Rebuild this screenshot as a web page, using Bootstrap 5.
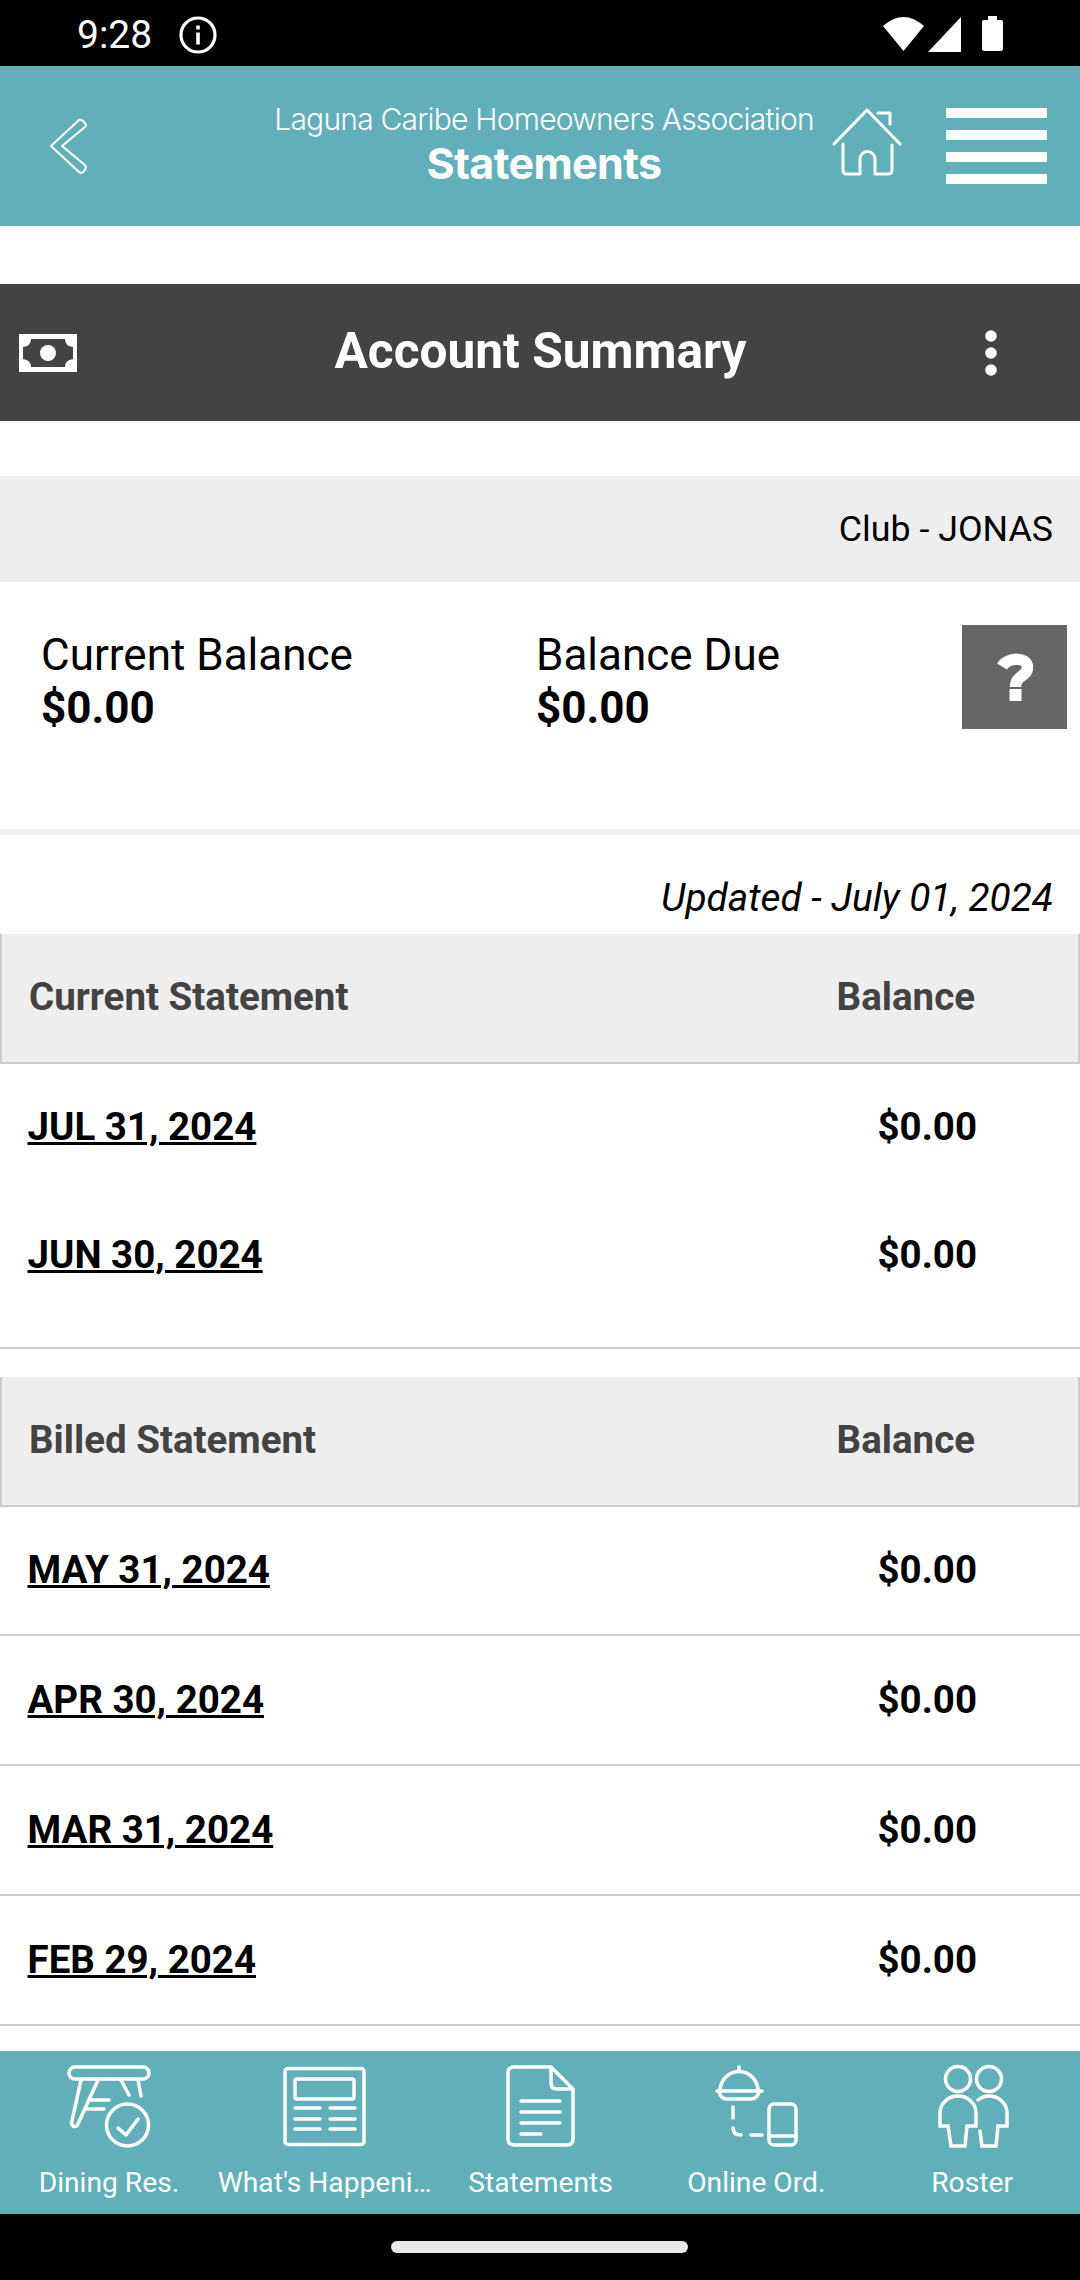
<!DOCTYPE html>
<html lang="en">
<head>
<meta charset="utf-8">
<meta name="viewport" content="width=device-width, initial-scale=1">
<title>Statements</title>
<link href="https://cdn.jsdelivr.net/npm/bootstrap@5.3.0/dist/css/bootstrap.min.css" rel="stylesheet">
<style>
  body { font-family: Roboto, sans-serif; color: #000; background: #fff; width: 1080px; height: 2280px; overflow: hidden; line-height: 1; }
  svg { display: block; flex: none; }
  .status-strip { height: 66px; padding: 4px 75px 0 77px; font-size: 39px; }
  .status-info { margin-left: 27px; }
  .app-head { height: 160px; background: #62afbc; padding: 0 33px 0 48px; }
  .head-titles { font-family: Inter, sans-serif; width: 540px; text-align: center; margin-bottom: 5px; }
  .club-name { font-size: 30px; font-weight: 400; line-height: 40px; letter-spacing: -.78px; white-space: nowrap; }
  .club-name { font-weight: 350; }
  .page-name { font-size: 43px; font-weight: 700; line-height: 49px; letter-spacing: -.6px; }
  .home-icon { margin: 0 44px 9px 18px; }
  .summary-head { height: 137px; margin-top: 58px; background: #434343; padding: 0 83px 0 19px; }
  .summary-title { font-size: 49.6px; margin-left: 19px; padding-bottom: 1px; }
  .club-strip { height: 106px; margin-top: 55px; background: #eee; padding: 1px 27px 0; font-size: 35.8px; }
  .balances { height: 253px; border-bottom: 6px solid #eee; padding: 43px 13px 0 41px; font-size: 44px; line-height: 53px; }
  .balance-col { width: 495px; padding-top: 4px; }
  .due-col { width: 380px; }
  .help-btn { width: 105px; height: 104px; background: #666; border: 0; border-radius: 0; }
  .updated { height: 99px; padding: 43px 27px 0; font-size: 38.8px; line-height: 40px; }
  .list-head { height: 130px; background: #eee; border: 2px solid #ccc; border-top: 0; color: #434343; font-size: 38.5px; padding: 0 103px 1px 27px; }
  .list-line { height: 128px; padding: 0 103px 2px 27.5px; font-size: 38.5px; }
  .list-line.ruled { height: 130px; padding-bottom: 0; }
  .list-line.first-line { height: 129px; }
  .list-line a { color: #000; text-underline-offset: 2px; text-decoration-thickness: 3px; }
  .ruled { border-bottom: 2px solid #ccc; }
  .closing { height: 29px; margin-bottom: 28px; }
  .tabs { height: 163px; background: #62afbc; color: #fff; font-size: 28.2px; padding-left: 1px; }
  .tab-cell { width: 216px; padding-top: 13px; white-space: nowrap; }
  .tab-cell svg { margin-bottom: 21px; }
  .home-zone { height: 66px; }
  .home-pill { width: 297px; height: 12px; background: #e8e8e8; margin-right: 1px; }
  .ln { fill: none; stroke: #fff; stroke-width: 3; stroke-linecap: round; stroke-linejoin: round; }
  .ln-thin { stroke-width: 2.2; }
  .ln-tab { stroke-width: 3.5; }
  .ln-sharp { stroke-linejoin: miter; }
</style>
<script src="https://cdn.jsdelivr.net/npm/bootstrap@5.3.0/dist/js/bootstrap.bundle.min.js"></script>
</head>
<body class="d-flex flex-column">
  <div class="status-strip bg-black text-white d-flex align-items-center justify-content-between flex-shrink-0">
    <div class="d-flex align-items-center">
      <span>9:28</span>
      <svg class="status-info" width="38" height="38" viewBox="0 0 38 38"><circle cx="19" cy="19" r="17" fill="none" stroke="#fff" stroke-width="3.2"/><path d="M19 9.500v4M19 16.500v12" stroke="#fff" stroke-width="3.600"/></svg>
    </div>
    <svg width="122" height="38" viewBox="0 0 122 38" fill="#fff"><path d="M0 10Q20.500-8 41 10L20.500 35zM78 1v35H45zM105 0h9v4h4q2 0 2 2v27q0 2-2 2h-17q-2 0-2-2V6q0-2 2-2h4z"/></svg>
  </div>

  <header class="app-head text-white d-flex align-items-center justify-content-between flex-shrink-0">
    <svg width="42" height="58" viewBox="0 0 42 58"><path class="ln ln-thin" d="M3 29 31 3Q34 2 36 5 39 8 37 10L14 29 37 48Q39 51 36 54 34 57 31 55Z"/></svg>
    <div class="d-flex align-items-center">
      <div class="head-titles">
        <div class="club-name">Laguna Caribe Homeowners Association</div>
        <div class="page-name">Statements</div>
      </div>
      <svg class="home-icon" width="70" height="70" viewBox="0 0 70 70"><path class="ln" d="M2 37 35 3 68 37M46 6H58V17M11 37V63Q11 67 15 67H28V52A7.500 7.500 0 0 1 43 52V67H56Q60 67 60 63V38"/></svg>
      <svg width="101" height="76" viewBox="0 0 101 76" fill="#fff"><path d="M0 0h101v10H0zM0 22h101v10H0zM0 44h101v10H0zM0 66h101v10H0z"/></svg>
    </div>
  </header>

  <section class="summary-head text-white d-flex align-items-center justify-content-between flex-shrink-0">
    <svg width="58" height="38" viewBox="0 0 58 38"><path fill="#fff" fill-rule="evenodd" d="M0 0H58V38H0ZM12 5Q12 12 4 13V25Q12 26 12 33H46Q46 26 54 25V13Q46 12 46 5Z"/><circle cx="29" cy="19" r="8" fill="#fff"/></svg>
    <div class="summary-title fw-bold">Account Summary</div>
    <svg width="12" height="46" viewBox="0 0 12 46" fill="#fff"><circle cx="6" cy="6" r="5.800"/><circle cx="6" cy="23" r="5.800"/><circle cx="6" cy="40" r="5.800"/></svg>
  </section>

  <div class="club-strip d-flex align-items-center justify-content-end flex-shrink-0">Club - JONAS</div>

  <section class="balances d-flex flex-shrink-0">
    <div class="balance-col flex-shrink-0">Current Balance<div class="fw-bold">$0.00</div></div>
    <div class="balance-col due-col flex-shrink-0">Balance Due<div class="fw-bold">$0.00</div></div>
    <button class="help-btn btn p-0 ms-auto flex-shrink-0 d-flex align-items-center justify-content-center" aria-label="Help">
      <svg width="36" height="48" viewBox="0 0 36 48"><path fill="none" stroke="#fff" stroke-width="11.500" d="M5 13.500C11 4 31.500 3.500 30.500 15 30 24 18.500 22 18.500 34"/><path fill="#fff" d="M12.500 36h12v12h-12z"/></svg>
    </button>
  </section>

  <div class="updated text-end fst-italic flex-shrink-0">Updated - July 01, 2024</div>

  <section class="flex-shrink-0">
    <div class="list-head fw-bold d-flex align-items-center justify-content-between"><span>Current Statement</span><span>Balance</span></div>
    <div class="list-line fw-bold d-flex align-items-center justify-content-between"><a href="#">JUL 31, 2024</a><span>$0.00</span></div>
    <div class="list-line fw-bold d-flex align-items-center justify-content-between"><a href="#">JUN 30, 2024</a><span>$0.00</span></div>
    <div class="closing ruled"></div>
  </section>

  <section class="flex-grow-1">
    <div class="list-head fw-bold d-flex align-items-center justify-content-between"><span>Billed Statement</span><span>Balance</span></div>
    <div class="list-line ruled first-line fw-bold d-flex align-items-center justify-content-between"><a href="#">MAY 31, 2024</a><span>$0.00</span></div>
    <div class="list-line ruled fw-bold d-flex align-items-center justify-content-between"><a href="#">APR 30, 2024</a><span>$0.00</span></div>
    <div class="list-line ruled fw-bold d-flex align-items-center justify-content-between"><a href="#">MAR 31, 2024</a><span>$0.00</span></div>
    <div class="list-line ruled fw-bold d-flex align-items-center justify-content-between"><a href="#">FEB 29, 2024</a><span>$0.00</span></div>
  </section>

  <nav class="tabs d-flex flex-shrink-0">
    <div class="tab-cell d-flex flex-column align-items-center">
      <svg width="84" height="84" viewBox="0 0 84 84"><g class="ln ln-tab"><rect x="2" y="3" width="80" height="12" rx="6"/><path d="M14 16 4.500 59Q5 64 10 62L31 16M54 16 62 31M71 16 74 32M24 36H42M20 45H37M51 64 59 71 71 55"/><circle cx="60.500" cy="61" r="21"/></g></svg>
      <span>Dining Res.</span>
    </div>
    <div class="tab-cell d-flex flex-column align-items-center">
      <svg width="84" height="84" viewBox="0 0 84 84"><g class="ln ln-tab"><rect x="2" y="4.500" width="79" height="76" rx="3"/><rect x="12" y="15" width="59" height="20" rx="2"/><path d="M12 44H37M12 55H37M12 65H37M47 44H72M47 55H72M47 65H72"/></g></svg>
      <span>What's Happeni…</span>
    </div>
    <div class="tab-cell d-flex flex-column align-items-center">
      <svg width="84" height="84" viewBox="-1 0 84 84"><g class="ln ln-tab"><path d="M52 3H15Q9 3 9 9V75Q9 81 15 81H68Q74 81 74 75V25ZM52 3V19Q52 25 58 25H74M22 37H61M22 48H61M22 59H61M22 70H42"/></g></svg>
      <span>Statements</span>
    </div>
    <div class="tab-cell d-flex flex-column align-items-center">
      <svg width="84" height="84" viewBox="-1 0 84 84"><g class="ln ln-tab"><path d="M24 3V7M5 27A18.500 19 0 0 1 43 27M2 27H47M4 28Q6 35 12 35H36Q42 35 44 28M18 43V54M18 64Q18 71 26 71M36 71H47"/><rect x="54" y="40" width="27" height="41" rx="5"/><path d="M54 72H81"/></g></svg>
      <span>Online Ord.</span>
    </div>
    <div class="tab-cell d-flex flex-column align-items-center">
      <svg width="84" height="84" viewBox="-1 0 84 84"><g class="ln ln-tab ln-sharp"><circle cx="27" cy="15" r="12.500"/><circle cx="58" cy="15" r="12.500"/><path d="M9 62V49A18 17 0 0 1 45 49V62H36L34 82H20L17 62ZM47 36Q52 32 58 32A18 17 0 0 1 76 49V62H67L65 82H51L49 67"/></g></svg>
      <span>Roster</span>
    </div>
  </nav>
  <div class="home-zone bg-black d-flex align-items-center justify-content-center flex-shrink-0"><div class="home-pill rounded-pill"></div></div>
</body>
</html>
